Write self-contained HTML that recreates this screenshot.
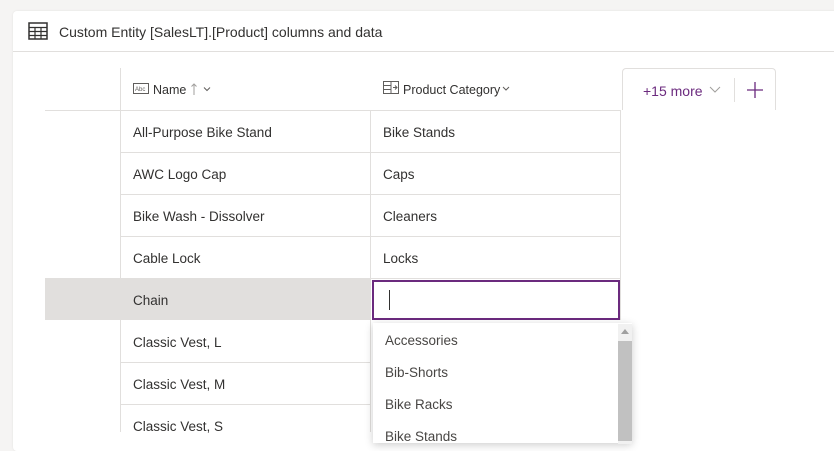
<!DOCTYPE html>
<html><head><style>
body{margin:0;width:834px;height:432px;overflow:hidden;background:#f5f4f3;font-family:"Liberation Sans",sans-serif;color:#323130;position:relative}
.card{position:absolute;left:13px;top:11px;width:830px;height:440px;background:#fff;border-radius:4px;box-shadow:0 0 2px rgba(0,0,0,.08)}
.abs{position:absolute}
.hl{position:absolute;height:1px;background:#e1dfdd}
.vl{position:absolute;width:1px;background:#e1dfdd}
.cell{position:absolute;font-size:13.5px;line-height:42px}
</style></head><body>
<div class="card"></div>
<svg class="abs" style="left:28px;top:22px" width="20" height="18" viewBox="0 0 20 18"><rect x="1" y="1" width="18" height="16" fill="none" stroke="#323130" stroke-width="1.5"/><path d="M1 5.5H19M1 9.5H19M1 13.5H19M7 5.5V17M13 5.5V17" stroke="#323130" stroke-width="1.2"/></svg>
<div class="abs" style="left:59px;top:24px;font-size:14px;color:#323130">Custom Entity [SalesLT].[Product] columns and data</div>
<div class="hl" style="left:13px;top:51px;width:821px"></div>
<div class="vl" style="left:120px;top:68px;height:364px"></div>
<div class="vl" style="left:370px;top:110px;height:322px"></div>
<div class="vl" style="left:620px;top:110px;height:210px"></div>
<div class="abs" style="left:45px;top:278px;width:325px;height:42px;background:#e1dfdd"></div>
<div class="hl" style="left:45px;top:110px;width:576px"></div>
<div class="hl" style="left:120px;top:152px;width:500px"></div>
<div class="hl" style="left:120px;top:194px;width:500px"></div>
<div class="hl" style="left:120px;top:236px;width:500px"></div>
<div class="hl" style="left:120px;top:278px;width:500px"></div>
<div class="hl" style="left:120px;top:362px;width:250px"></div>
<div class="hl" style="left:120px;top:404px;width:250px"></div>
<svg class="abs" style="left:133px;top:83px" width="16" height="11"><rect x=".5" y=".5" width="15" height="10" fill="none" stroke="#605e5c"/><text x="2" y="8" font-size="6" fill="#605e5c" font-family="Liberation Sans">Abc</text></svg>
<div class="abs" style="left:153px;top:83px;font-size:12.5px">Name</div>
<svg class="abs" style="left:190px;top:82px" width="24" height="14"><path d="M4 13V2M1.5 4.5L4 2L6.5 4.5" fill="none" stroke="#a19f9d" stroke-width="1"/><path d="M14 5.5L17 8.5L20 5.5" fill="none" stroke="#605e5c" stroke-width="1"/></svg>
<svg class="abs" style="left:383px;top:81px" width="16" height="13"><rect x=".5" y=".5" width="15" height="12" fill="none" stroke="#605e5c"/><path d="M.5 4.5H8M.5 8.5H8M8 .5V12.5M10 6.5H14M12 4.5L14 6.5L12 8.5" fill="none" stroke="#605e5c"/></svg>
<div class="abs" style="left:403px;top:83px;font-size:12.5px">Product Category</div>
<svg class="abs" style="left:501px;top:82px" width="12" height="12"><path d="M2 5L5 8L8 5" fill="none" stroke="#605e5c" stroke-width="1"/></svg>
<div class="abs" style="left:622px;top:68px;width:154px;height:42px;border:1px solid #e1dfdd;border-bottom:none;border-radius:4px 4px 0 0;box-sizing:border-box"></div>
<div class="abs" style="left:643px;top:83px;font-size:14px;color:#6b2a7e">+15 more</div>
<svg class="abs" style="left:708px;top:84px" width="14" height="12"><path d="M2 3L7 8L12 3" fill="none" stroke="#a19f9d" stroke-width="1"/></svg>
<div class="vl" style="left:734px;top:78px;height:24px"></div>
<svg class="abs" style="left:746px;top:81px" width="18" height="18"><path d="M9 1V17M1 9H17" stroke="#6b2a7e" stroke-width="1.3"/></svg>
<div class="cell" style="left:133px;top:112px">All-Purpose Bike Stand</div><div class="cell" style="left:383px;top:112px">Bike Stands</div>
<div class="cell" style="left:133px;top:154px">AWC Logo Cap</div><div class="cell" style="left:383px;top:154px">Caps</div>
<div class="cell" style="left:133px;top:196px">Bike Wash - Dissolver</div><div class="cell" style="left:383px;top:196px">Cleaners</div>
<div class="cell" style="left:133px;top:238px">Cable Lock</div><div class="cell" style="left:383px;top:238px">Locks</div>
<div class="cell" style="left:133px;top:280px">Chain</div>
<div class="cell" style="left:133px;top:322px">Classic Vest, L</div>
<div class="cell" style="left:133px;top:364px">Classic Vest, M</div>
<div class="cell" style="left:133px;top:406px">Classic Vest, S</div>
<div class="abs" style="left:372px;top:280px;width:248px;height:40px;border:2px solid #6b2a7e;box-sizing:border-box;background:#fff"></div>
<div class="abs" style="left:389px;top:290px;width:1px;height:20px;background:#323130"></div>
<div class="abs" style="left:373px;top:323px;width:259px;height:120px;background:#fff;box-shadow:0 2px 8px rgba(0,0,0,.2)"></div>
<div class="abs" style="left:618px;top:324px;width:14px;height:120px;background:#f1f1f1"></div>
<div class="abs" style="left:618px;top:341px;width:14px;height:100px;background:#c1c1c1"></div>
<div class="abs" style="left:621px;top:329px;width:0;height:0;border-left:4px solid transparent;border-right:4px solid transparent;border-bottom:5px solid #a0a0a0"></div>
<div class="abs" style="left:385px;top:333px;font-size:13.5px;color:#484644">Accessories</div>
<div class="abs" style="left:385px;top:365px;font-size:13.5px;color:#484644">Bib-Shorts</div>
<div class="abs" style="left:385px;top:397px;font-size:13.5px;color:#484644">Bike Racks</div>
<div class="abs" style="left:385px;top:429px;font-size:13.5px;color:#484644">Bike Stands</div>
</body></html>
